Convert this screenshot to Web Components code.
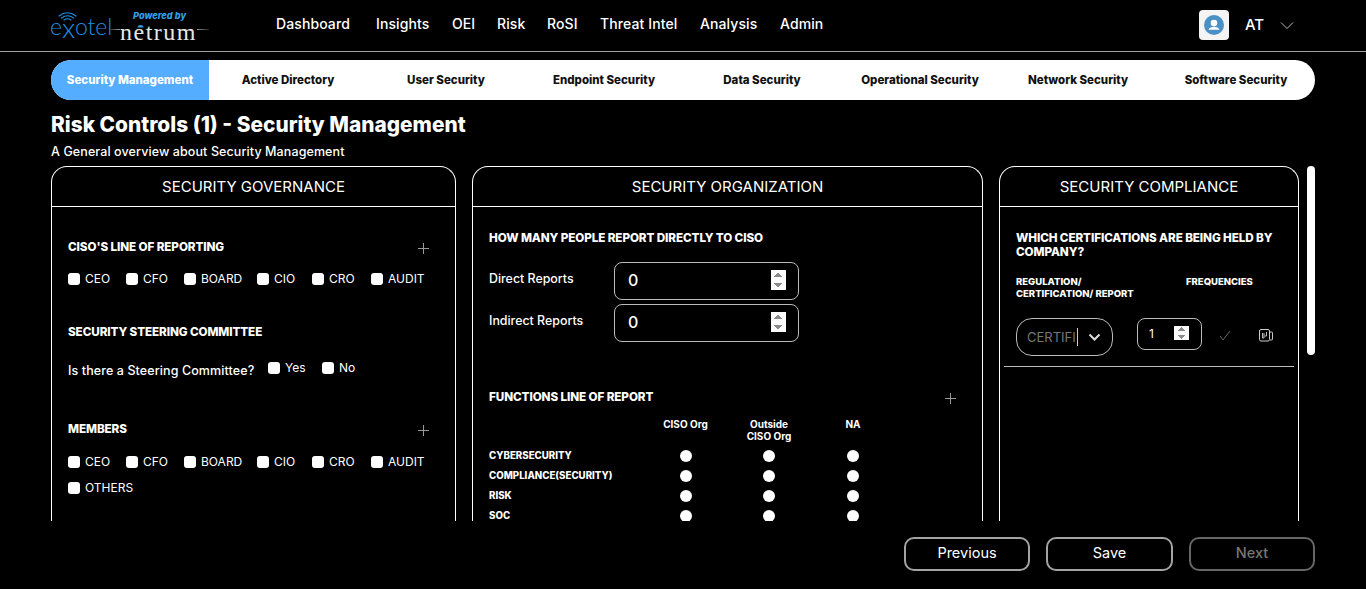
<!DOCTYPE html>
<html lang="en"><head><meta charset="utf-8"><title>Risk Controls</title>
<style>
html,body{margin:0;background:#000;color:#fff;font-family:Inter,"Noto Sans",sans-serif;height:589px;overflow:hidden}
risk-page{display:block}
</style></head><body>
<risk-page></risk-page>
<script>
const def=(name,html)=>customElements.define(name,class extends HTMLElement{
  constructor(){super();this.attachShadow({mode:'open'}).innerHTML=html;}
});
const H=`font-weight:800;font-size:11.7px;letter-spacing:-.1px;line-height:14px;color:#fff`;
def('brand-logo',`<style>
:host{display:block;position:relative;width:165px;height:51px;flex:none}
svg{position:absolute;inset:0}
.ex{position:absolute;left:1px;top:11px;font:300 23px/30px Lato,sans-serif;color:#1f8fe0;letter-spacing:-.1px;white-space:nowrap}
.ex b{font-weight:300;font-size:28px;position:relative;top:3px;line-height:0}
.pw{position:absolute;left:84px;top:10px;font:italic 800 9.2px/12px Inter,sans-serif;color:#2f9fe8;white-space:nowrap}
.ne{position:absolute;left:71px;top:23px;font:400 24px/18px "Liberation Serif",serif;color:#e8e8e8;letter-spacing:1.5px}
</style>
<svg width="165" height="51" fill="none"><defs><linearGradient id="s"><stop offset="0" stop-color="#999"/><stop offset="1" stop-color="#222"/></linearGradient><linearGradient id="l"><stop offset="0" stop-color="#222"/><stop offset="1" stop-color="#999"/></linearGradient></defs><rect x="60" y="29" width="11" height="1" fill="url(#l)"/><rect x="148" y="29" width="12" height="1" fill="url(#s)"/><g stroke="#1f8fe0" stroke-width="1.2" stroke-linecap="round"><path d="M10 16q8.500-6.500 17 0"/><path d="M12.500 18q6-4.500 12 0"/><path d="M15 20q3.500-2.500 7 0"/></g><path d="M88.500 27.500a3 2.500 0 0 1 6 0z" fill="#2f9fe8"/></svg>
<span class="ex">e<b>x</b>otel</span><span class="pw">Powered by</span><span class="ne">netrum</span>`);
def('main-nav',`<style>
:host{display:grid;grid-template-columns:100px 76px 45px 50px 53px 100px 80px auto;font:500 14px/48px Inter,sans-serif;color:#fff;letter-spacing:.1px;height:51px}
span{white-space:nowrap}
</style><span>Dashboard</span><span>Insights</span><span>OEI</span><span>Risk</span><span>RoSI</span><span>Threat Intel</span><span>Analysis</span><span>Admin</span>`);
def('user-menu',`<style>
:host{display:flex;align-items:center;height:50px;flex:none;align-self:flex-start}
.a{width:30px;height:30px;background:#f4f4f4;border-radius:4px;display:flex;align-items:center;justify-content:center;margin-right:16px}
.t{font:500 15px/20px Inter,sans-serif;width:35px}
</style><div class="a"><svg width="20" height="20" viewBox="0 0 20 20"><circle cx="10" cy="10" r="10" fill="#4a90c4"/><circle cx="10" cy="8" r="3.300" fill="#fff"/><path d="M4.500 14.800c1-2.300 3-3 5.500-3s4.500.7 5.500 3z" fill="#fff"/></svg></div><span class="t">AT</span><svg width="14" height="9" fill="none"><path d="M1 1.500l6 6 6-6" stroke="#bbb" stroke-width="1"/></svg>`);
def('app-header',`<style>
:host{display:flex;height:51px;border-bottom:1px solid #a3a3a3;padding:0 72px 0 49px;box-sizing:content-box;align-items:center}
main-nav{margin-left:62px;flex:1}
</style><brand-logo></brand-logo><main-nav></main-nav><user-menu></user-menu>`);
def('tab-bar',`<style>
:host{display:grid;grid-template-columns:repeat(8,1fr);margin:8px 51px 0;height:40px;background:#fff;border-radius:20px;overflow:hidden;font:800 11.5px/41px Inter,sans-serif;color:#111;text-align:center;white-space:nowrap}
.on{background:#54adff;color:#fff}
</style><div class="on">Security Management</div><div>Active Directory</div><div>User Security</div><div>Endpoint Security</div><div>Data Security</div><div>Operational Security</div><div>Network Security</div><div>Software Security</div>`);
def('page-title',`<style>
:host{display:block;margin:13px 51px 0;height:53px}
h1{margin:0;font:800 20.85px/24px Inter,sans-serif}
p{margin:3px 0 0;font:500 12.5px/24px Inter,sans-serif;letter-spacing:.1px}
</style><h1>Risk Controls (1) - Security Management</h1><p>A General overview about Security Management</p>`);
def('panel-card',`<style>
:host{display:block;flex:none;box-sizing:border-box;border:1px solid #fff;border-bottom:0;border-radius:16px 16px 0 0;height:400px;overflow:hidden}
header{height:39px;border-bottom:1px solid #fff;text-align:center;font:400 15px/39px Inter,sans-serif}
</style><header><slot name="title"></slot></header><slot></slot>`);
def('plus-icon',`<style>:host{display:block;width:11px;height:11px;flex:none;margin-top:3px}</style><svg width="11" height="11" fill="none" style="display:block"><path d="M5.500 0v11M0 5.500h11" stroke="#999" stroke-width="1"/></svg>`);
def('section-head',`<style>
:host{display:flex;justify-content:space-between;align-items:center;${H}}
</style><slot></slot><slot name="end"></slot>`);
def('check-item',`<style>
:host{display:inline-flex;align-items:center;gap:5px;font:400 12px/14px Inter,sans-serif;white-space:nowrap}
input{appearance:none;margin:0;width:12px;height:12px;background:#fff;border-radius:3px;flex:none}
</style><input type="checkbox"><slot></slot>`);
def('check-row',`<style>
:host{display:grid;grid-template-columns:58px 58px 73px 55px 59px auto;height:14px}
</style><slot></slot>`);
def('num-field',`<style>
:host{display:block;box-sizing:border-box;border:1px solid #bbb;border-radius:8px;overflow:hidden}
input{display:block;box-sizing:border-box;width:100%;height:100%;background:transparent;border:0;outline:0;color:#fff;padding:5px 12px 7px var(--pl,13px);font:var(--f,500 16px/24px) Inter,sans-serif}
input::-webkit-inner-spin-button{opacity:1}
</style><input type="number">`);
def('governance-panel',`<style>
:host{display:block;padding:33px 16px 0;width:371px}
section-head{height:14px;padding-right:10px}
.gap1{margin-top:18px}.s2{margin-top:39px}.m{margin-top:44px}
.q{display:flex;align-items:center;margin-top:25px;font:500 12.5px/14px Inter,sans-serif;letter-spacing:.1px;height:14px}
.q span{width:200px;white-space:nowrap}
.q check-item:nth-child(2){width:54px;position:relative;top:-3px;letter-spacing:0}
.q check-item:nth-child(3){position:relative;top:-3px;letter-spacing:0}
.m2{margin-top:19px}.r2{margin-top:12px}
</style>
<section-head>CISO'S LINE OF REPORTING<plus-icon slot="end"></plus-icon></section-head>
<check-row class="gap1"><check-item>CEO</check-item><check-item>CFO</check-item><check-item>BOARD</check-item><check-item>CIO</check-item><check-item>CRO</check-item><check-item>AUDIT</check-item></check-row>
<section-head class="s2">SECURITY STEERING COMMITTEE</section-head>
<div class="q"><span>Is there a Steering Committee?</span><check-item>Yes</check-item><check-item>No</check-item></div>
<section-head class="m">MEMBERS<plus-icon slot="end"></plus-icon></section-head>
<check-row class="m2"><check-item>CEO</check-item><check-item>CFO</check-item><check-item>BOARD</check-item><check-item>CIO</check-item><check-item>CRO</check-item><check-item>AUDIT</check-item></check-row>
<check-row class="r2"><check-item>OTHERS</check-item></check-row>`);
def('report-field',`<style>
:host{display:grid;grid-template-columns:125px 185px;font:500 12.4px/14px Inter,sans-serif;height:38px}
span{padding-top:10px}
num-field{height:38px}
</style><span><slot></slot></span><num-field></num-field>`);
def('function-grid',`<style>
:host{display:grid;grid-template-columns:155px 83px 84px 84px;grid-template-rows:28px;grid-auto-rows:20px;font:800 9.7px/12px Inter,sans-serif;align-items:center;margin-top:14px}
.h{text-align:center;align-self:start;font-weight:700;font-size:10px}
input{appearance:none;margin:0;width:12px;height:12px;border-radius:50%;background:#fff;justify-self:center}
.l{white-space:nowrap}
.head{display:contents}
</style>
<div class="head"><div></div><div class="h">CISO Org</div><div class="h">Outside<br>CISO Org</div><div class="h">NA</div></div>
<span class="l">CYBERSECURITY</span><input type="radio" name="a"><input type="radio" name="a"><input type="radio" name="a">
<span class="l">COMPLIANCE(SECURITY)</span><input type="radio" name="b"><input type="radio" name="b"><input type="radio" name="b">
<span class="l">RISK</span><input type="radio" name="c"><input type="radio" name="c"><input type="radio" name="c">
<span class="l">SOC</span><input type="radio" name="d"><input type="radio" name="d"><input type="radio" name="d">`);
def('organization-panel',`<style>
:host{display:block;padding:24px 16px 0}
section-head{height:14px}
report-field{margin-top:4px}
.first{margin-top:17px}
.fn{margin-top:48px}
</style>
<section-head>HOW MANY PEOPLE REPORT DIRECTLY TO CISO</section-head>
<report-field class="first">Direct Reports</report-field>
<report-field>Indirect Reports</report-field>
<section-head class="fn" style="padding-right:10px">FUNCTIONS LINE OF REPORT<plus-icon slot="end"></plus-icon></section-head>
<function-grid></function-grid>`);
def('compliance-panel',`<style>
:host{display:block;padding:24px 0 0}
.p{padding:0 16px}
section-head{display:block}
.labels{display:grid;grid-template-columns:170px auto;font:800 9.5px/12px Inter,sans-serif;margin-top:17px;white-space:nowrap}
.row{display:flex;align-items:flex-start;margin-top:18px}
.sel{box-sizing:border-box;width:97px;height:38px;border:1px solid #bbb;border-radius:16px;display:flex;align-items:center;padding-left:10px;font:400 13px/20px Inter,sans-serif;color:#777;flex:none}
.sel i{display:block;width:1px;height:18px;background:#ccc;margin-left:1px}
.sel svg{margin-left:10px}
num-field{width:65px;height:32px;margin-left:24px;flex:none;--pl:11px;--f:400 12px/20px}
.c{margin:12px 0 0 17px;flex:none}
.d{margin:11px 0 0 28px;flex:none}
hr{margin:10px 4px 0;border:0;border-top:1px solid #bbb}
</style>
<div class="p"><section-head>WHICH CERTIFICATIONS ARE BEING HELD BY COMPANY?</section-head>
<div class="labels"><span>REGULATION/<br>CERTIFICATION/ REPORT</span><span>FREQUENCIES</span></div>
<div class="row"><div class="sel">CERTIFI<i></i><svg width="13" height="8" fill="none"><path d="M1.500 1.500l5 5 5-5" stroke="#ddd" stroke-width="2"/></svg></div>
<num-field data-v="1"></num-field>
<svg class="c" width="12" height="11" fill="none"><path d="M1 6l3 4 7-9" stroke="#666" stroke-width="1"/></svg>
<svg class="d" width="14" height="13" fill="none" stroke="#ccc" stroke-width="1"><rect x=".5" y=".5" width="10" height="11.500" rx="1.500"/><path d="M11 3h1.500q1 0 1 1v6q0 1-1 1H11"/><path d="M3.500 4v5h1.500V4M7.500 3v4H5.500" stroke="#bbb"/></svg></div></div>
<hr>`);
def('panels-area',`<style>
:host{display:flex;position:relative;gap:16px;margin:0 51px;height:355px;overflow:hidden}
.g{width:405px}.o{width:511px}.c{width:300px}
.thumb{position:absolute;right:0;top:0;width:8px;height:189px;border-radius:4px;background:#fff}
</style>
<panel-card class="g"><span slot="title">SECURITY GOVERNANCE</span><governance-panel></governance-panel></panel-card>
<panel-card class="o"><span slot="title">SECURITY ORGANIZATION</span><organization-panel></organization-panel></panel-card>
<panel-card class="c"><span slot="title">SECURITY COMPLIANCE</span><compliance-panel></compliance-panel></panel-card>
<div class="thumb"></div>`);
def('nav-button',`<style>
:host{display:block;width:126px;height:34px}
:host(.mid){width:127px}
button{width:100%;height:100%;box-sizing:border-box;background:transparent;border:2px solid #a3a3a3;border-radius:10px;color:#fff;font:400 14.5px/20px Inter,sans-serif;padding:0 0 2px}
:host([disabled]) button{border-color:#666;color:#777;font-weight:500}
</style><button><slot></slot></button>`);
def('footer-actions',`<style>
:host{display:flex;justify-content:flex-end;gap:16px;margin:16px 51px 0}
</style><nav-button>Previous</nav-button><nav-button class="mid">Save</nav-button><nav-button disabled>Next</nav-button>`);
def('risk-page',`<style>:host{display:block}</style><app-header></app-header><tab-bar></tab-bar><page-title></page-title><panels-area></panels-area><footer-actions></footer-actions>`);
const walk=r=>{r.querySelectorAll('*').forEach(e=>{if(e.localName==='num-field')e.shadowRoot.querySelector('input').setAttribute('value',e.dataset.v||'0');if(e.shadowRoot)walk(e.shadowRoot);});};
walk(document);
</script></body></html>
